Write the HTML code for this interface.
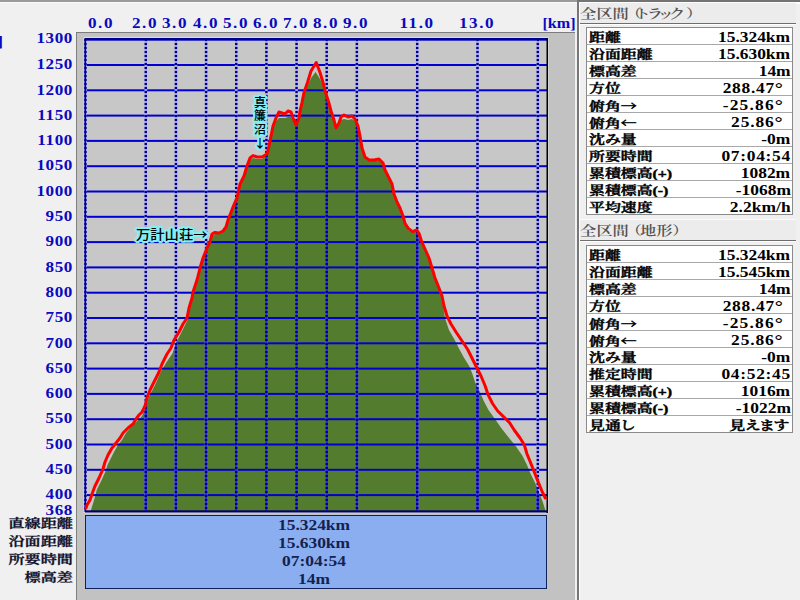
<!DOCTYPE html>
<html lang="ja"><head><meta charset="utf-8"><title>profile</title>
<style>
html,body{margin:0;padding:0}
body{width:800px;height:600px;position:relative;overflow:hidden;background:#f0f0f0;font-family:"Liberation Serif","Noto Serif CJK JP","Noto Serif CJK SC",serif;color:#000}
.abs{position:absolute}
.frame{position:absolute;left:76px;top:31.5px;width:499px;height:580px;background:#c2c2c2;border-left:1px solid #808080;border-top:1px solid #7c7c7c;box-sizing:border-box}
.yl{position:absolute;left:0;width:72px;text-align:right;font-family:"Liberation Serif",serif;font-weight:bold;font-size:14px;line-height:17px;height:17px;color:#0a0ac0;transform:scaleX(1.22);transform-origin:100% 50%;white-space:nowrap;letter-spacing:0.5px;margin-left:0.6px}
.xl{position:absolute;top:14.7px;letter-spacing:1.25px;width:60px;text-align:center;font-family:"Liberation Serif",serif;font-weight:bold;font-size:14px;line-height:17px;height:17px;color:#0a0ac0;transform:scaleX(1.22);transform-origin:50% 50%;white-space:nowrap}
.lab{position:absolute;font-family:"Noto Sans CJK JP","Liberation Sans",sans-serif;font-weight:500;color:#000;white-space:nowrap;text-shadow:-2px -1px 0 #84eef2,-2px 0px 0 #84eef2,-2px 1px 0 #84eef2,-1px -2px 0 #84eef2,-1px -1px 0 #84eef2,-1px 0px 0 #84eef2,-1px 1px 0 #84eef2,-1px 2px 0 #84eef2,0px -2px 0 #84eef2,0px -1px 0 #84eef2,0px 1px 0 #84eef2,0px 2px 0 #84eef2,1px -2px 0 #84eef2,1px -1px 0 #84eef2,1px 0px 0 #84eef2,1px 1px 0 #84eef2,1px 2px 0 #84eef2,2px -1px 0 #84eef2,2px 0px 0 #84eef2,2px 1px 0 #84eef2}
.panel{position:absolute;left:85px;top:515px;width:462px;height:74px;background:#8aaef0;border:1px solid #10205a;box-sizing:border-box}
.pv{position:absolute;left:82.5px;width:462px;text-align:center;font-family:"Liberation Serif",serif;font-weight:bold;font-size:14.5px;line-height:18px;height:18px;color:#14224e;white-space:nowrap;transform:scaleX(1.2);transform-origin:50% 50%}
.pl{position:absolute;left:0;width:73px;text-align:right;font-weight:600;-webkit-text-stroke:0.3px #0c0c28;font-size:12.5px;line-height:18px;height:18px;color:#0c0c28;transform:scaleX(1.29);transform-origin:100% 50%;white-space:nowrap}
.sepd{position:absolute;left:577px;top:2px;width:1.5px;height:598px;background:#777}
.sepw{position:absolute;left:578.5px;top:2px;width:1.5px;height:598px;background:#fff}
.hdr{position:absolute;left:580px;width:216px;height:20px;background:#ececec;border-bottom:1px solid #6e6e6e;box-shadow:0 1px 0 #fff;color:#525252;font-size:13px;line-height:21px;white-space:nowrap;font-weight:600}
.hdr span{display:inline-block;transform:scaleX(1.27);transform-origin:0 50%;margin-left:-0.5px;font-size:12.8px;font-feature-settings:"palt"}
.hdr i{font-style:normal;margin-left:3.7px;margin-right:-1.2px}
.hdr b{font-weight:inherit;letter-spacing:-1.05px;margin-left:-2.4px;margin-right:3px}
.tbl{position:absolute;left:586px;width:207px;background:#fff;border:1px solid #8a8a8a;box-sizing:border-box}
.row{position:relative;height:17px;box-sizing:border-box;border-top:1px solid #a8a8a8;overflow:hidden}
.row:first-child{border-top:none;height:16px}
.k{position:absolute;left:2px;top:1.5px;font-weight:600;-webkit-text-stroke:0.45px #000;font-size:12.5px;line-height:17px;transform:scaleX(1.27);transform-origin:0 50%;white-space:nowrap;font-feature-settings:"palt"}
.ar{font-family:"Noto Serif CJK JP","Noto Serif CJK SC",serif}
.v{position:absolute;right:1.5px;top:1px;font-family:"Liberation Serif","Noto Serif CJK JP","Noto Serif CJK SC",serif;font-weight:bold;font-size:14.5px;line-height:16px;white-space:nowrap;transform:scaleX(1.2);transform-origin:100% 50%}
.v.j{font-weight:600;-webkit-text-stroke:0.45px #000;font-size:12.5px;transform:scaleX(1.27);top:1.5px;line-height:17px;right:3.5px;font-feature-settings:"palt"}
.deg{display:inline-block;width:13.3px;text-align:left;letter-spacing:0;font-size:17px;line-height:10px;vertical-align:-1px}
</style></head><body>
<div class="abs" style="left:0;top:0;width:800px;height:1.5px;background:#9a9a9a"></div>
<div class="abs" style="left:0;top:1.5px;width:800px;height:1.5px;background:#fafafa"></div>
<div class="abs" style="left:577px;top:0;width:223px;height:2px;background:#747474"></div>
<div class="abs" style="left:579px;top:2px;width:221px;height:1.5px;background:#fdfdfd"></div>
<div class="frame"></div>
<svg width="800" height="600" viewBox="0 0 800 600" style="position:absolute;left:0;top:0">
<rect x="83.6" y="36.8" width="465" height="476.5" fill="#dcdcdc"/>
<rect x="85" y="38" width="463" height="474" fill="#c7c7c7"/>
<polygon fill="#547c2e" points="91,511 91,510 94.6,498.3 96.7,490 100.8,481.7 105,472.5 107.5,465 110,460 114,452 118,445 122,440 126,433 131,427 136,422 139,419.5 142,416 145.8,406.7 149,396.7 155,385 160.8,371.7 165.8,363.3 172.5,353.3 175.8,343.3 181.7,331.7 187.5,320 189.5,308 192.5,298 193,292 197,280 200,268 203,258 207,248 210,242 212,236 215,234 219,234 223,232 226,228 228,220 230,215 233,207 236,200 237,198 240,184 244,176 247,166 250,160 253,158 257,159 262,159 267,155 269,146 271,136 273,126 276,121 279,118 282,118 285,118 288,117 291,117 293,120 296,126 299,119 300,113 302,104.5 304,95 307.5,86 311,78 315.6,72 320,79 323,86 325.6,94 328.75,103.5 331,112 334,121 336,129 339,125 341,120 344,119 348,120 352,119 355,121 358,127 360,136 362,148 365,158 369,161 374,161 379,160 383,163 385,170 389,178 392,184 394,194 397,202 400,208 403,216 405,224 409,231 415,231 419,234 421,240 425,248 429,258 432,268 435,278 439,288 441,296 443,306 445,318 449,330 455,340.5 459.5,349.5 464,357.7 469.2,366 472.2,373.5 475.2,382.5 479.7,391.5 483.5,400.5 488.5,410 495,419 501.4,428.3 508.7,437.5 516,446.6 522.4,455.8 527,465 530.7,474 535.3,483.3 539,492.4 542.6,501.6 545.3,510 546,511 546,511 91,511"/>
<rect x="86" y="38.70" width="461" height="2" fill="#0000d0"/>
<rect x="86" y="64.00" width="461" height="2" fill="#0000d0"/>
<rect x="86" y="89.30" width="461" height="2" fill="#0000d0"/>
<rect x="86" y="114.60" width="461" height="2" fill="#0000d0"/>
<rect x="86" y="139.90" width="461" height="2" fill="#0000d0"/>
<rect x="86" y="165.20" width="461" height="2" fill="#0000d0"/>
<rect x="86" y="190.50" width="461" height="2" fill="#0000d0"/>
<rect x="86" y="215.80" width="461" height="2" fill="#0000d0"/>
<rect x="86" y="241.10" width="461" height="2" fill="#0000d0"/>
<rect x="86" y="266.40" width="461" height="2" fill="#0000d0"/>
<rect x="86" y="291.70" width="461" height="2" fill="#0000d0"/>
<rect x="86" y="317.00" width="461" height="2" fill="#0000d0"/>
<rect x="86" y="342.30" width="461" height="2" fill="#0000d0"/>
<rect x="86" y="367.60" width="461" height="2" fill="#0000d0"/>
<rect x="86" y="392.90" width="461" height="2" fill="#0000d0"/>
<rect x="86" y="418.20" width="461" height="2" fill="#0000d0"/>
<rect x="86" y="443.50" width="461" height="2" fill="#0000d0"/>
<rect x="86" y="468.80" width="461" height="2" fill="#0000d0"/>
<rect x="86" y="494.10" width="461" height="2" fill="#0000d0"/>
<clipPath id="gclip"><polygon points="91,511 91,510 94.6,498.3 96.7,490 100.8,481.7 105,472.5 107.5,465 110,460 114,452 118,445 122,440 126,433 131,427 136,422 139,419.5 142,416 145.8,406.7 149,396.7 155,385 160.8,371.7 165.8,363.3 172.5,353.3 175.8,343.3 181.7,331.7 187.5,320 189.5,308 192.5,298 193,292 197,280 200,268 203,258 207,248 210,242 212,236 215,234 219,234 223,232 226,228 228,220 230,215 233,207 236,200 237,198 240,184 244,176 247,166 250,160 253,158 257,159 262,159 267,155 269,146 271,136 273,126 276,121 279,118 282,118 285,118 288,117 291,117 293,120 296,126 299,119 300,113 302,104.5 304,95 307.5,86 311,78 315.6,72 320,79 323,86 325.6,94 328.75,103.5 331,112 334,121 336,129 339,125 341,120 344,119 348,120 352,119 355,121 358,127 360,136 362,148 365,158 369,161 374,161 379,160 383,163 385,170 389,178 392,184 394,194 397,202 400,208 403,216 405,224 409,231 415,231 419,234 421,240 425,248 429,258 432,268 435,278 439,288 441,296 443,306 445,318 449,330 455,340.5 459.5,349.5 464,357.7 469.2,366 472.2,373.5 475.2,382.5 479.7,391.5 483.5,400.5 488.5,410 495,419 501.4,428.3 508.7,437.5 516,446.6 522.4,455.8 527,465 530.7,474 535.3,483.3 539,492.4 542.6,501.6 545.3,510 546,511 546,511 91,511"/></clipPath>
<line x1="85.45" y1="39" x2="85.45" y2="511" stroke="#9c9cf4" stroke-width="2.6"/>
<line x1="145.77" y1="39" x2="145.77" y2="511" stroke="#9c9cf4" stroke-width="2.6"/>
<line x1="175.92" y1="39" x2="175.92" y2="511" stroke="#9c9cf4" stroke-width="2.6"/>
<line x1="206.08" y1="39" x2="206.08" y2="511" stroke="#9c9cf4" stroke-width="2.6"/>
<line x1="236.24" y1="39" x2="236.24" y2="511" stroke="#9c9cf4" stroke-width="2.6"/>
<line x1="266.40" y1="39" x2="266.40" y2="511" stroke="#9c9cf4" stroke-width="2.6"/>
<line x1="296.56" y1="39" x2="296.56" y2="511" stroke="#9c9cf4" stroke-width="2.6"/>
<line x1="326.71" y1="39" x2="326.71" y2="511" stroke="#9c9cf4" stroke-width="2.6"/>
<line x1="356.87" y1="39" x2="356.87" y2="511" stroke="#9c9cf4" stroke-width="2.6"/>
<line x1="417.19" y1="39" x2="417.19" y2="511" stroke="#9c9cf4" stroke-width="2.6"/>
<line x1="477.50" y1="39" x2="477.50" y2="511" stroke="#9c9cf4" stroke-width="2.6"/>
<line x1="537.82" y1="39" x2="537.82" y2="511" stroke="#9c9cf4" stroke-width="2.6"/>
<g clip-path="url(#gclip)">
<line x1="85.45" y1="39" x2="85.45" y2="511" stroke="#2a2ade" stroke-width="2.6"/>
<line x1="145.77" y1="39" x2="145.77" y2="511" stroke="#2a2ade" stroke-width="2.6"/>
<line x1="175.92" y1="39" x2="175.92" y2="511" stroke="#2a2ade" stroke-width="2.6"/>
<line x1="206.08" y1="39" x2="206.08" y2="511" stroke="#2a2ade" stroke-width="2.6"/>
<line x1="236.24" y1="39" x2="236.24" y2="511" stroke="#2a2ade" stroke-width="2.6"/>
<line x1="266.40" y1="39" x2="266.40" y2="511" stroke="#2a2ade" stroke-width="2.6"/>
<line x1="296.56" y1="39" x2="296.56" y2="511" stroke="#2a2ade" stroke-width="2.6"/>
<line x1="326.71" y1="39" x2="326.71" y2="511" stroke="#2a2ade" stroke-width="2.6"/>
<line x1="356.87" y1="39" x2="356.87" y2="511" stroke="#2a2ade" stroke-width="2.6"/>
<line x1="417.19" y1="39" x2="417.19" y2="511" stroke="#2a2ade" stroke-width="2.6"/>
<line x1="477.50" y1="39" x2="477.50" y2="511" stroke="#2a2ade" stroke-width="2.6"/>
<line x1="537.82" y1="39" x2="537.82" y2="511" stroke="#2a2ade" stroke-width="2.6"/>
</g>
<line x1="85.45" y1="39" x2="85.45" y2="511" stroke="#000078" stroke-width="2.4" stroke-dasharray="2 2"/>
<line x1="145.77" y1="39" x2="145.77" y2="511" stroke="#000078" stroke-width="2.4" stroke-dasharray="2 2"/>
<line x1="175.92" y1="39" x2="175.92" y2="511" stroke="#000078" stroke-width="2.4" stroke-dasharray="2 2"/>
<line x1="206.08" y1="39" x2="206.08" y2="511" stroke="#000078" stroke-width="2.4" stroke-dasharray="2 2"/>
<line x1="236.24" y1="39" x2="236.24" y2="511" stroke="#000078" stroke-width="2.4" stroke-dasharray="2 2"/>
<line x1="266.40" y1="39" x2="266.40" y2="511" stroke="#000078" stroke-width="2.4" stroke-dasharray="2 2"/>
<line x1="296.56" y1="39" x2="296.56" y2="511" stroke="#000078" stroke-width="2.4" stroke-dasharray="2 2"/>
<line x1="326.71" y1="39" x2="326.71" y2="511" stroke="#000078" stroke-width="2.4" stroke-dasharray="2 2"/>
<line x1="356.87" y1="39" x2="356.87" y2="511" stroke="#000078" stroke-width="2.4" stroke-dasharray="2 2"/>
<line x1="417.19" y1="39" x2="417.19" y2="511" stroke="#000078" stroke-width="2.4" stroke-dasharray="2 2"/>
<line x1="477.50" y1="39" x2="477.50" y2="511" stroke="#000078" stroke-width="2.4" stroke-dasharray="2 2"/>
<line x1="537.82" y1="39" x2="537.82" y2="511" stroke="#000078" stroke-width="2.4" stroke-dasharray="2 2"/>
<rect x="85" y="38" width="462" height="2" fill="#000090"/>
<rect x="84.5" y="38" width="1.5" height="474" fill="#000090"/>
<rect x="546.5" y="38" width="1.5" height="475" fill="#000"/>
<rect x="85" y="510.3" width="463" height="2.2" fill="#000068"/>
<polyline fill="none" stroke="#ff0000" stroke-width="3" stroke-linejoin="round" stroke-linecap="round" points="86,508 87,505 90,500 92,494 95,486 99,478 103,469 105,462 108,455 112,448 116,443 120,438 123,433 128,428 133,424 136,419 139,415 142,412 145,406 147,398 150,390 154,382 159,372 162,364 167,354 171,348 174,340 179,332 183,324 187,318 189,308 192,298 193,292 197,280 200,268 203,258 207,248 210,242 212,234 215,232.4 219,233 223,231 226,227 228,220 230,215 233,207 236,200 237,198 240,184 244,176 247,166 250,158 253,155.6 257,157 262,157 267,154 269,146 271,136 273,126 276,118 279,112 282,113 285,114 288,111 291,112 293,118 296,125 299,118 300,111 302,102.5 304,92.5 307.5,82.5 311,71 316.25,62.5 320,72.5 323,82.5 325.6,92.5 328.75,102.5 331,111 334,120 336,128 339,123 341,117 344,115 348,117 352,116 355,119 358,126 360,136 362,148 365,157 369,160 374,160 379,159 383,163 385,170 389,178 392,184 394,194 397,202 400,208 403,216 405,223.3 408.3,228.3 412.5,231.7 416.7,230 419,233.3 421.7,241.7 425,249 429,258 432,268 435,278 439,288 442,296 444,306 447,316 451,324 456,332 461.7,340.5 467.7,349.5 472.2,358.5 476.7,367.5 481.2,376.5 485,385.5 488,394.5 492.5,403.5 497.7,411 503.2,416.4 509.6,422.8 514.2,430 519.7,437.5 524.3,444.8 527,454 530.7,463 534.4,472.3 538,481.5 541.7,490.6 545.3,498"/>
</svg>
<div class="yl" style="left:-70px;top:31.5px;height:19px;line-height:19px;font-size:15px;letter-spacing:0">[m]</div>
<div class="yl" style="top:29.9px">1300</div>
<div class="yl" style="top:56.2px">1250</div>
<div class="yl" style="top:81.5px">1200</div>
<div class="yl" style="top:106.8px">1150</div>
<div class="yl" style="top:132.1px">1100</div>
<div class="yl" style="top:157.4px">1050</div>
<div class="yl" style="top:182.7px">1000</div>
<div class="yl" style="top:208.0px">950</div>
<div class="yl" style="top:233.3px">900</div>
<div class="yl" style="top:258.6px">850</div>
<div class="yl" style="top:283.9px">800</div>
<div class="yl" style="top:309.2px">750</div>
<div class="yl" style="top:334.5px">700</div>
<div class="yl" style="top:359.8px">650</div>
<div class="yl" style="top:385.1px">600</div>
<div class="yl" style="top:410.4px">550</div>
<div class="yl" style="top:435.7px">500</div>
<div class="yl" style="top:461.0px">450</div>
<div class="yl" style="top:486.3px">400</div>
<div class="yl" style="top:502.0px">368</div>
<div class="xl" style="left:71px">0.0</div>
<div class="xl" style="left:115.3px">2.0</div>
<div class="xl" style="left:145.4px">3.0</div>
<div class="xl" style="left:175.6px">4.0</div>
<div class="xl" style="left:205.7px">5.0</div>
<div class="xl" style="left:235.9px">6.0</div>
<div class="xl" style="left:266.1px">7.0</div>
<div class="xl" style="left:296.2px">8.0</div>
<div class="xl" style="left:326.4px">9.0</div>
<div class="xl" style="left:386.7px">11.0</div>
<div class="xl" style="left:447.0px">13.0</div>
<div class="xl" style="left:528.7px;letter-spacing:0;transform:scaleX(1.15)">[km]</div>
<div class="lab" style="left:135.5px;top:225.5px;width:80px;height:16px;line-height:16px;font-size:13px;transform:scaleX(1.1);transform-origin:0 50%">万計山荘→</div>
<div class="lab" style="left:253.5px;top:96px;width:12px;font-size:12px;line-height:12px;writing-mode:vertical-rl;text-orientation:upright;letter-spacing:1.7px">真簾沼↓</div>
<div class="panel"></div>
<div class="pv" style="top:516px">15.324km</div>
<div class="pv" style="top:534px">15.630km</div>
<div class="pv" style="top:552px">07:04:54</div>
<div class="pv" style="top:570px">14m</div>
<div class="pl" style="top:515px">直線距離</div>
<div class="pl" style="top:533px">沿面距離</div>
<div class="pl" style="top:551px">所要時間</div>
<div class="pl" style="top:569px">標高差</div>
<div class="sepd"></div><div class="sepw"></div>
<div class="hdr" style="top:3px"><span>全区間<i>（</i><b>トラック</b>）</span></div>
<div class="tbl" style="top:27px">
<div class="row"><span class="k">距離</span><span class="v" style="letter-spacing:0.00px;margin-right:0.00px">15.324km</span></div>
<div class="row"><span class="k">沿面距離</span><span class="v" style="letter-spacing:0.00px;margin-right:0.00px">15.630km</span></div>
<div class="row"><span class="k">標高差</span><span class="v" style="letter-spacing:0.00px;margin-right:0.00px">14m</span></div>
<div class="row"><span class="k">方位</span><span class="v" style="letter-spacing:0.60px">288.47<span class="deg">°</span></span></div>
<div class="row"><span class="k">俯角<span class="ar">→</span></span><span class="v" style="letter-spacing:1.01px">-25.86<span class="deg">°</span></span></div>
<div class="row"><span class="k">俯角<span class="ar">←</span></span><span class="v" style="letter-spacing:0.72px">25.86<span class="deg">°</span></span></div>
<div class="row"><span class="k">沈み量</span><span class="v" style="letter-spacing:0.00px;margin-right:0.00px">-0m</span></div>
<div class="row"><span class="k">所要時間</span><span class="v" style="letter-spacing:0.60px;margin-right:-0.60px">07:04:54</span></div>
<div class="row"><span class="k">累積標高(+)</span><span class="v" style="letter-spacing:0.00px;margin-right:0.00px">1082m</span></div>
<div class="row"><span class="k">累積標高(-)</span><span class="v" style="letter-spacing:0.00px;margin-right:0.00px">-1068m</span></div>
<div class="row"><span class="k">平均速度</span><span class="v" style="letter-spacing:0.05px;margin-right:-0.05px">2.2km/h</span></div>
</div>
<div class="hdr" style="top:219.5px;box-shadow:0 1px 0 #fff,0 -1px 0 #fbfbfb"><span>全区間<i>（</i>地形）</span></div>
<div class="tbl" style="top:245px">
<div class="row"><span class="k">距離</span><span class="v" style="letter-spacing:0.00px;margin-right:0.00px">15.324km</span></div>
<div class="row"><span class="k">沿面距離</span><span class="v" style="letter-spacing:0.00px;margin-right:0.00px">15.545km</span></div>
<div class="row"><span class="k">標高差</span><span class="v" style="letter-spacing:0.00px;margin-right:0.00px">14m</span></div>
<div class="row"><span class="k">方位</span><span class="v" style="letter-spacing:0.60px">288.47<span class="deg">°</span></span></div>
<div class="row"><span class="k">俯角<span class="ar">→</span></span><span class="v" style="letter-spacing:1.01px">-25.86<span class="deg">°</span></span></div>
<div class="row"><span class="k">俯角<span class="ar">←</span></span><span class="v" style="letter-spacing:0.72px">25.86<span class="deg">°</span></span></div>
<div class="row"><span class="k">沈み量</span><span class="v" style="letter-spacing:0.00px;margin-right:0.00px">-0m</span></div>
<div class="row"><span class="k">推定時間</span><span class="v" style="letter-spacing:0.60px;margin-right:-0.60px">04:52:45</span></div>
<div class="row"><span class="k">累積標高(+)</span><span class="v" style="letter-spacing:0.00px;margin-right:0.00px">1016m</span></div>
<div class="row"><span class="k">累積標高(-)</span><span class="v" style="letter-spacing:0.00px;margin-right:0.00px">-1022m</span></div>
<div class="row"><span class="k">見通し</span><span class="v j">見えます</span></div>
</div>
</body></html>
